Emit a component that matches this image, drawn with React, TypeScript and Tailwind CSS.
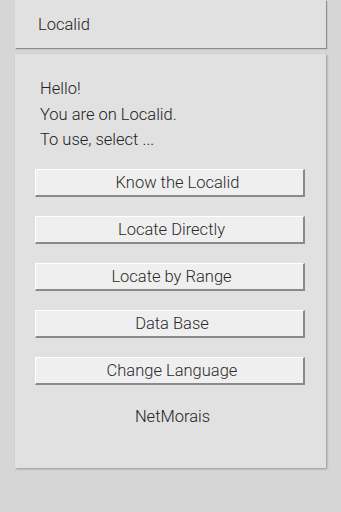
import React from "react";

const buttons = [
  { label: "Know the Localid", extra: "pl-[16px]" },
  { label: "Locate Directly", extra: "pl-[4px]" },
  { label: "Locate by Range", extra: "pl-[4px]" },
  { label: "Data Base", extra: "pl-[5px]" },
  { label: "Change Language", extra: "pl-[5px]" },
];

export default function App() {
  return (
    <div
      className="min-h-[512px] w-[341px] bg-[#d6d6d6] px-[15px] font-light text-[#222222]"
      style={{ fontFamily: "Roboto, 'Liberation Sans', sans-serif" }}
    >
      <div className="flex h-[48px] w-[311px] items-center bg-[#e1e1e1] pl-[23px] pt-[3px] text-[16.5px] shadow-[1px_1px_1px_rgba(0,0,0,0.35)]">
        Localid
      </div>
      <div className="mt-[6px] flex h-[414px] w-[311px] flex-col bg-[#e1e1e1] pt-[22px] shadow-[1px_1px_2px_rgba(0,0,0,0.3)]">
        <div className="pl-[25px] text-[16.5px] leading-[25.5px]">
          <div>Hello!</div>
          <div>You are on Localid.</div>
          <div>To use, select ...</div>
        </div>
        <div className="mt-[16px] flex flex-col gap-[19px] pl-[20px] pr-[21px]">
          {buttons.map((b) => (
            <div
              key={b.label}
              className={`flex h-[28px] items-center justify-center border-t border-l border-t-white border-l-white border-b-2 border-r-2 border-b-[#8a8a8a] border-r-[#8a8a8a] bg-[#efefef] pt-[2px] text-[16.5px] text-[#2a2a2a] ${b.extra}`}
            >
              {b.label}
            </div>
          ))}
        </div>
        <div className="mt-[19px] pl-[4px] text-center text-[16.5px] leading-[25px]">
          NetMorais
        </div>
      </div>
    </div>
  );
}
